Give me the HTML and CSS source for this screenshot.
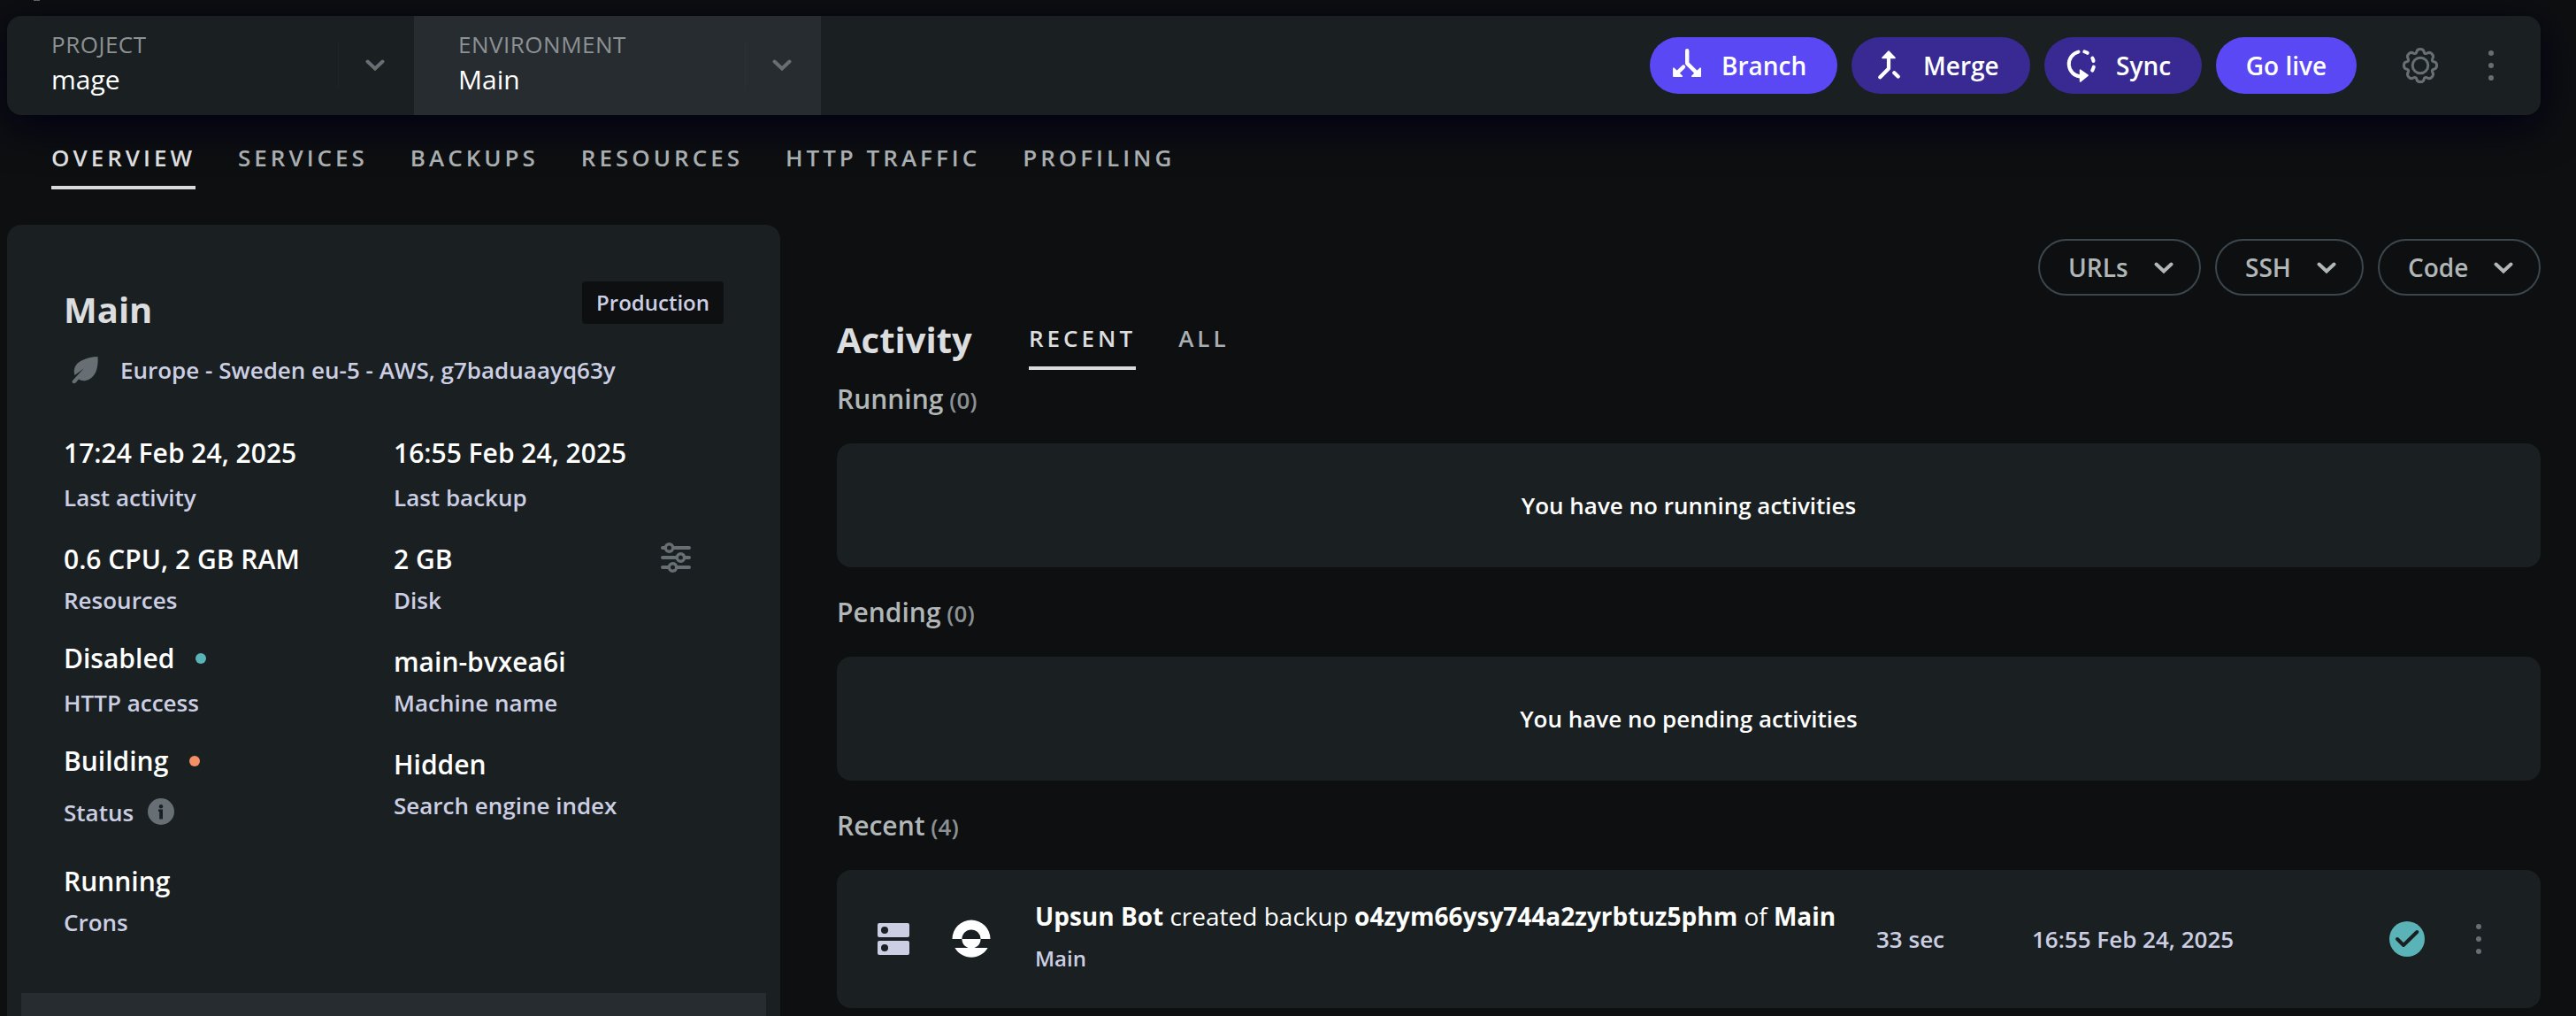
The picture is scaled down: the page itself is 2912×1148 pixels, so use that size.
FILE: index.html
```
<!DOCTYPE html>
<html lang="en">
<head>
<meta charset="utf-8">
<title>mage – Main</title>
<link rel="stylesheet" href="styles.css">
</head>
<body>
<svg class="defs" width="0" height="0" aria-hidden="true">
  <symbol id="chevron" viewBox="0 0 22 14"><path d="M2.5 2.5 11 10.5 19.5 2.5" fill="none" stroke="currentColor" stroke-width="4" stroke-linecap="round"/></symbol>
  <symbol id="kebab" viewBox="0 0 6 34"><g fill="currentColor"><circle cx="3" cy="3" r="3"/><circle cx="3" cy="17" r="3"/><circle cx="3" cy="31" r="3"/></g></symbol>
</svg>

<div class="crumb"></div>
<header class="bar">
  <div class="picker">
    <div class="picker-text"><span class="picker-label">PROJECT</span><span class="picker-value">mage</span></div>
    <span class="picker-toggle"><svg width="22" height="14"><use href="#chevron"/></svg></span>
  </div>
  <div class="picker active">
    <div class="picker-text"><span class="picker-label">ENVIRONMENT</span><span class="picker-value">Main</span></div>
    <span class="picker-toggle"><svg width="22" height="14"><use href="#chevron"/></svg></span>
  </div>
  <div class="actions">
    <button class="btn branch">
      <svg width="34" height="34" viewBox="0 0 34 34" fill="none" stroke="#fff" stroke-width="4.4" stroke-linecap="round" stroke-linejoin="round"><path d="M17.2 3.2V17.6L27.5 27.9M13 21.6 6.5 27.9"/><path d="M1.9 23.2V32.2H11.3ZM32.2 23.2V32.2H22.8Z" fill="#fff" stroke-width="1.6"/></svg>
      Branch</button>
    <button class="btn deep merge">
      <svg width="34" height="34" viewBox="0 0 34 34" fill="none" stroke="#fff" stroke-width="4.2" stroke-linecap="round" stroke-linejoin="round"><path d="M17 8V21.5L7.3 31.2M23.3 26.2 27.7 30.6"/><path d="M17 2 24 9.4H10Z" fill="#fff" stroke-width="1.6"/></svg>
      Merge</button>
    <button class="btn deep sync">
      <svg width="34" height="38" viewBox="0 0 34 38" fill="none" stroke="#fff" stroke-width="4" stroke-linecap="round" stroke-linejoin="round"><path d="M13.5 3.6A14.2 14.2 0 0 0 15.5 31.5M20.3 3.4Q22.3 3.9 23.7 4.8M29.3 10.6Q30.3 12.2 30.5 14M30.8 20.6Q30.3 22.8 29.2 24.6"/><path d="M15.6 24.2V37L24.2 30.2Z" fill="#fff" stroke-width="1.6"/></svg>
      Sync</button>
    <button class="btn live">Go live</button>
  </div>
  <svg class="gear" width="42" height="42" viewBox="-21 -21 42 42" fill="none" stroke="currentColor" stroke-width="3" stroke-linejoin="round"><path d="M-4.2 -15.4Q-3.6 -18.6 0 -18.6T4.2 -15.4Q4.6 -13.2 6.5 -13.4L7.9 -13.9Q10.6 -15.6 13.1 -13.1T13.9 -7.9L13.4 -6.5Q13.2 -4.6 15.4 -4.2Q18.6 -3.6 18.6 0T15.4 4.2Q13.2 4.6 13.4 6.5L13.9 7.9Q15.6 10.6 13.1 13.1T7.9 13.9L6.5 13.4Q4.6 13.2 4.2 15.4Q3.6 18.6 0 18.6T-4.2 15.4Q-4.6 13.2 -6.5 13.4L-7.9 13.9Q-10.6 15.6 -13.1 13.1T-13.9 7.9L-13.4 6.5Q-13.2 4.6 -15.4 4.2Q-18.6 3.6 -18.6 0T-15.4 -4.2Q-13.2 -4.6 -13.4 -6.5L-13.9 -7.9Q-15.6 -10.6 -13.1 -13.1T-7.9 -13.9L-6.5 -13.4Q-4.6 -13.2 -4.2 -15.4Z"/><circle r="8.8"/></svg>
  <svg class="kebab" width="6" height="34"><use href="#kebab"/></svg>
</header>

<nav class="tabs">
  <a class="tab current">OVERVIEW</a><a class="tab">SERVICES</a><a class="tab">BACKUPS</a><a class="tab">RESOURCES</a><a class="tab">HTTP TRAFFIC</a><a class="tab">PROFILING</a>
</nav>

<main class="content">
  <section class="info">
    <div class="info-head"><h1>Main</h1><span class="badge">Production</span></div>
    <div class="region">
      <svg width="32" height="32" viewBox="0 0 32 32"><path d="M30.5 1C31.5 14 28 25.500 17 28Q12 28.800 9 26.500L5.500 30.500Q3.500 32 2 30.600T2.500 27.500L14.500 14.500 4.500 22C2.500 15 5 9 12 5.500C17 2.800 24 1 30.500 1Z" fill="#676f74"/></svg>
      <span>Europe - Sweden eu-5 - AWS, g7baduaayq63y</span>
    </div>
    <dl class="facts">
      <div class="fact first"><dd>17:24 Feb 24, 2025</dd><dt>Last activity</dt></div>
      <div class="fact first"><dd>16:55 Feb 24, 2025</dd><dt>Last backup</dt></div>
      <div class="fact"><dd>0.6 CPU, 2 GB RAM</dd><dt>Resources</dt></div>
      <div class="fact"><dd class="spread">2 GB
        <svg width="34" height="36" viewBox="0 0 34 36" fill="none" stroke="#676f74" stroke-width="4" stroke-linecap="round"><path d="M2 7H5M14 7H32M2 18H17M27 18H32M2 29H9M18 29H32"/><g stroke-width="3.4"><circle cx="9.500" cy="7" r="4.200"/><circle cx="22.500" cy="18" r="4.200"/><circle cx="13.500" cy="29" r="4.200"/></g></svg></dd><dt>Disk</dt></div>
      <div class="fact raised"><dd>Disabled<i class="dot teal"></i></dd><dt>HTTP access</dt></div>
      <div class="fact"><dd>main-bvxea6i</dd><dt>Machine name</dt></div>
      <div class="fact raised status"><dd>Building<i class="dot orange"></i></dd><dt>Status
        <svg width="30" height="30" viewBox="0 0 30 30"><circle cx="15" cy="15" r="15" fill="#676f74"/><g fill="#1a1f21"><circle cx="15" cy="9.200" r="2.200"/><path d="M12 12.500H17V23.500H13.200V15H12Z"/></g></svg></dt></div>
      <div class="fact"><dd>Hidden</dd><dt>Search engine index</dt></div>
      <div class="fact"><dd>Running</dd><dt>Crons</dt></div>
    </dl>
    <div class="info-foot"></div>
  </section>

  <section class="activity">
    <div class="links">
      <button class="pill">URLs<svg width="22" height="14"><use href="#chevron"/></svg></button>
      <button class="pill narrow">SSH<svg width="22" height="14"><use href="#chevron"/></svg></button>
      <button class="pill">Code<svg width="22" height="14"><use href="#chevron"/></svg></button>
    </div>
    <div class="activity-head"><h2>Activity</h2><a class="tab current">RECENT</a><a class="tab">ALL</a></div>
    <h3 class="near">Running <small>(0)</small></h3>
    <div class="panel empty">You have no running activities</div>
    <h3>Pending <small>(0)</small></h3>
    <div class="panel empty">You have no pending activities</div>
    <h3>Recent <small>(4)</small></h3>
    <div class="panel entry">
      <svg width="36" height="36" viewBox="0 0 36 36"><g fill="#cccfe3"><rect width="36" height="16" rx="2"/><rect y="20" width="36" height="16" rx="2"/></g><g fill="#1a1f21"><circle cx="8" cy="8" r="4"/><circle cx="8" cy="28" r="4"/></g></svg>
      <svg width="44" height="44" viewBox="-22 -22 44 44" fill="#fff"><path d="M-21.500 0A21.500 21.500 0 0 1 21.500 0H10.600A10.600 10.600 0 0 0 -10.600 0Z"/><path d="M-10.600 0H10.600A10.600 10.600 0 0 1 3.500 10H18.600A21.500 21.500 0 0 1 -18.600 10H-3.500A10.600 10.600 0 0 1 -10.600 0Z"/></svg>
      <div class="entry-text"><p><b>Upsun Bot</b> created backup <b>o4zym66ysy744a2zyrbtuz5phm</b> of <b>Main</b></p><span>Main</span></div>
      <span class="meta">33 sec</span>
      <span class="meta">16:55 Feb 24, 2025</span>
      <svg width="40" height="40" viewBox="0 0 40 40"><circle cx="20" cy="20" r="20" fill="#59b3b7"/><path d="M9 20 16 27 31.300 12" fill="none" stroke="#1a1f21" stroke-width="4" stroke-linecap="round" stroke-linejoin="round"/></svg>
      <svg class="kebab" width="6" height="34"><use href="#kebab"/></svg>
    </div>
  </section>
</main>
</body>
</html>
```
FILE: styles.css
```
* { box-sizing: border-box; }

body {
  margin: 0;
  height: 1148px;
  overflow: hidden;
  background: #0d0f11;
  color: #fff;
  font: 600 26px/36px "Open Sans", "Noto Sans", sans-serif;
}

h1, h2, h3, p, dl, dd, dt { margin: 0; }
svg { display: block; flex: none; }
.defs { position: absolute; }
button { font: inherit; color: inherit; border: 0; padding: 0; margin: 0; }

.crumb {
  width: 7px;
  height: 1px;
  margin: 0 0 17px 38px;
  background: #6b6e70;
}

/* top bar */
.bar {
  display: flex;
  align-items: center;
  height: 112px;
  margin: 0 40px 0 8px;
  padding-right: 53px;
  border-radius: 16px;
  background: #1a1f21;
  box-shadow: 0 12px 48px #000014;
}

.picker {
  display: flex;
  align-items: center;
  width: 460px;
  height: 112px;
  padding-left: 50px;
}
.picker.active { background: #272c30; }
.picker-text { width: 324px; padding-bottom: 5px; }
.picker-label, .picker-value { display: block; }
.picker-label { font-weight: 400; letter-spacing: .5px; color: #8c9194; }
.picker-value { font-size: 30px; font-weight: 400; line-height: 43px; }
.picker-toggle {
  display: flex;
  align-items: center;
  height: 52px;
  padding-left: 30px;
  border-left: 1px solid #1f2427;
  color: #676f74;
}
.picker.active .picker-toggle { border-color: #2b3034; }

.actions { display: flex; gap: 16px; margin-left: auto; }
.btn {
  display: flex;
  align-items: center;
  height: 64px;
  border-radius: 32px;
  background: #5b48f5;
  font-size: 28px;
  line-height: 38px;
  white-space: nowrap;
}
.deep { background: #382a92; }
.branch { width: 212px; padding-left: 25px; gap: 22px; }
.branch svg { margin-top: -6px; }
.merge { width: 202px; padding-left: 25px; gap: 22px; }
.merge svg { margin-top: -2px; }
.sync { width: 178px; padding-left: 25px; gap: 22px; }
.live { width: 159px; justify-content: center; }
.gear { margin: 0 56px 0 51px; color: #676f74; }
.kebab { color: #676f74; }

/* tabs */
.tabs { display: flex; gap: 48px; margin: 30px 0 0 58px; }
.tab {
  height: 54px;
  border-bottom: 4px solid transparent;
  letter-spacing: 4px;
  color: #a9aeb0;
}
.tab.current { color: #dcdddf; border-color: #d8dadb; }

.content { display: flex; gap: 64px; margin: 40px 40px 0 8px; }

/* environment card */
.info {
  display: flex;
  flex-direction: column;
  width: 874px;
  height: 894px;
  padding: 64px 16px 0;
  border-radius: 16px 16px 0 0;
  background: #1a1f21;
}
.info-head {
  display: flex;
  justify-content: space-between;
  height: 82px;
  padding: 0 48px;
}
h1 { padding-top: 5px; font-size: 40px; font-weight: 700; line-height: 54px; color: #dcdddf; }
.badge {
  width: 160px;
  height: 48px;
  border-radius: 4px;
  background: #0d0f11;
  color: #cccfe3;
  font-size: 24px;
  line-height: 48px;
  text-align: center;
}
.region { display: flex; align-items: center; gap: 24px; padding-left: 56px; color: #cccfe3; }

.facts {
  display: grid;
  grid-template-columns: 373px 340px;
  grid-template-rows: 120px 116.5px 116px 131.5px 146.5px;
  margin-top: 55.5px;
  padding-left: 48px;
}
dd { height: 48px; font-size: 30px; line-height: 40px; }
dt { color: #cccfe3; }
.first dd { height: 52px; }
.raised { margin-top: -4px; }
.raised dd { display: flex; align-items: center; gap: 24px; height: 40px; margin-bottom: 12px; }
.raised.status dd { margin-bottom: 20px; }
.status dt { display: flex; align-items: center; gap: 16px; }
.status dt svg { margin-top: -2px; }
.spread { display: flex; justify-content: space-between; padding-right: 4px; }
.dot { width: 12px; height: 12px; border-radius: 50%; }
.teal { background: #59b3b7; }
.orange { background: #f58f65; }
.info-foot { height: 26px; background: #272c30; }

/* activity column */
.activity { flex: 1; padding-top: 16px; }
.links { display: flex; justify-content: flex-end; gap: 16px; }
.pill {
  display: flex;
  align-items: center;
  justify-content: space-between;
  width: 184px;
  height: 64px;
  padding: 0 29px 0 32px;
  border: 2px solid #3c474d;
  border-radius: 32px;
  background: none;
  color: #b1b6b7;
  font-size: 28px;
  line-height: 38px;
}
.pill.narrow { width: 168px; }
.pill svg { margin-top: 1px; }
.activity-head { display: flex; padding-top: 30px; }
.activity-head .tab + .tab { margin-left: 48px; }
h2 {
  width: 217px;
  height: 54px;
  margin-top: -7.5px;
  color: #dcdddf;
  font-size: 40px;
  font-weight: 700;
  line-height: 54px;
}
h3 { padding: 30.5px 0; color: #b1b6b7; font-size: 30px; font-weight: 600; line-height: 40px; }
h3.near { padding-top: 12.5px; }
small { margin-left: -1px; color: #8c9194; font-size: 26px; line-height: 36px; }

.panel { border-radius: 16px; background: #1a1f21; }
.empty { height: 140px; line-height: 140px; text-align: center; }
.entry {
  display: grid;
  grid-template-columns: 84px 94px 951px 176px 404px 98px 6px;
  align-items: center;
  height: 156px;
  padding-left: 46px;
}
.entry-text { align-self: start; padding-top: 33px; white-space: nowrap; }
.entry-text p { height: 50px; font-size: 28px; font-weight: 400; line-height: 38px; }
.entry-text b { font-weight: 700; }
.entry-text span { display: block; color: #cccfe3; font-size: 24px; line-height: 34px; }
.meta { color: #cccfe3; }
```
